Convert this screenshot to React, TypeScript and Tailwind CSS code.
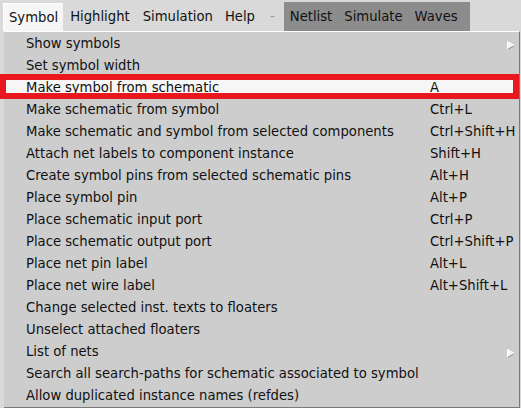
import React from "react";

type Item = { label: string; accel?: string; sub?: boolean; active?: boolean };

const items: Item[] = [
  { label: "Show symbols", sub: true },
  { label: "Set symbol width" },
  { label: "Make symbol from schematic", accel: "A", active: true },
  { label: "Make schematic from symbol", accel: "Ctrl+L" },
  { label: "Make schematic and symbol from selected components", accel: "Ctrl+Shift+H" },
  { label: "Attach net labels to component instance", accel: "Shift+H" },
  { label: "Create symbol pins from selected schematic pins", accel: "Alt+H" },
  { label: "Place symbol pin", accel: "Alt+P" },
  { label: "Place schematic input port", accel: "Ctrl+P" },
  { label: "Place schematic output port", accel: "Ctrl+Shift+P" },
  { label: "Place net pin label", accel: "Alt+L" },
  { label: "Place net wire label", accel: "Alt+Shift+L" },
  { label: "Change selected inst. texts to floaters" },
  { label: "Unselect attached floaters" },
  { label: "List of nets", sub: true },
  { label: "Search all search-paths for schematic associated to symbol" },
  { label: "Allow duplicated instance names (refdes)" },
];

function SubArrow() {
  return (
    <svg width="8" height="9" viewBox="0 0 8 9" className="absolute right-[4px] top-[8px]">
      <polygon points="0.5,0.5 7.5,4.5 0.5,8.5" fill="#f4f4f4" />
      <polyline points="7.5,4.5 0.5,8.5" fill="none" stroke="#8a8a8a" strokeWidth="1" />
      <polyline points="0.5,8.5 0.5,0.5 7.5,4.5" fill="none" stroke="#ffffff" strokeWidth="1" />
    </svg>
  );
}

export default function App() {
  return (
    <div
      className="relative h-[408px] w-[521px] overflow-hidden bg-[#d9d9d9] text-[13.2px] text-[#111]"
      style={{ fontFamily: '"DejaVu Sans", sans-serif' }}
    >
      <div className="flex h-[31px] items-start pl-[3px] pt-[2px] leading-[28px]">
        <div className="mt-[1px] h-[28px] border-l border-t border-white bg-[#f6f6f6] px-[5px]">Symbol</div>
        <div className="mt-[1px] px-[7px]">Highlight</div>
        <div className="mt-[1px] px-[6px]">Simulation</div>
        <div className="mt-[1px] px-[6px]">Help</div>
        <div className="mt-[1px] px-[9px] text-[#9a9a9a]">-</div>
        <div className="flex h-[29px] items-center bg-[#8c8c8c] pr-[6px] leading-none">
          <span className="px-[6px]">Netlist</span>
          <span className="px-[6px]">Simulate</span>
          <span className="px-[6px]">Waves</span>
        </div>
      </div>

      <div className="ml-[4px] w-[516px] border-r border-b border-t border-[#7a7a7a] border-t-white bg-[#cdcdcd] pt-[1px]">
        {items.map((it) => (
          <div
            key={it.label}
            className={`relative grid h-[22px] grid-cols-[404px_1fr] items-center pl-[22px] ${
              it.active ? "bg-[#f6f6f6]" : ""
            }`}
          >
            <span className="whitespace-nowrap">{it.label}</span>
            <span className="whitespace-nowrap">{it.accel ?? ""}</span>
            {it.sub && <SubArrow />}
          </div>
        ))}
      </div>

      <div className="absolute left-0 top-[74px] h-[25px] w-[519px] border-[6px] border-[#e8181e]" />
    </div>
  );
}
